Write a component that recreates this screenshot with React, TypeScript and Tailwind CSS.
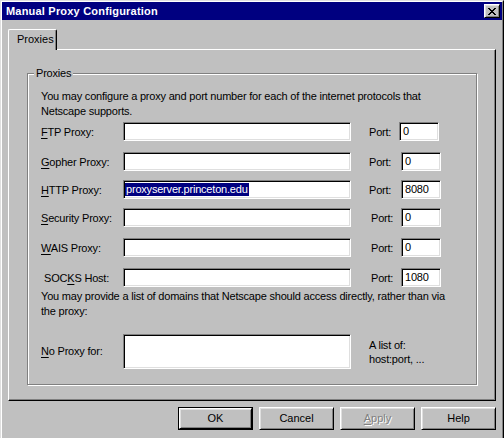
import React from "react";

const sunken =
  "bg-white border border-t-[#808080] border-l-[#808080] border-b-white border-r-white shadow-[inset_1px_1px_0_#000,inset_-1px_-1px_0_#dfdfdf]";
const raised =
  "bg-[#c0c0c0] border border-t-white border-l-white border-b-black border-r-black shadow-[inset_1px_1px_0_#dfdfdf,inset_-1px_-1px_0_#808080]";

function Key({ children }: { children: React.ReactNode }) {
  return <span className="underline underline-offset-[2px]">{children}</span>;
}

// pixel pattern for the win95 close glyph
const closeGlyph = [
  "xx....xx",
  ".xx..xx.",
  "..xxxx..",
  "...xx...",
  "..xxxx..",
  ".xx..xx.",
  "xx....xx",
];

function CloseIcon() {
  return (
    <svg width="8" height="7" viewBox="0 0 8 7" shapeRendering="crispEdges">
      {closeGlyph.map((row, y) =>
        row.split("").map((c, x) =>
          c === "x" ? <rect key={`${x}-${y}`} x={x} y={y} width="1" height="1" fill="#000" /> : null
        )
      )}
    </svg>
  );
}

interface RowProps {
  label: React.ReactNode;
  port: string;
  mt: string;
  portLabel: string;
  value?: string;
}

function ProxyRow({ label, port, mt, portLabel, value }: RowProps) {
  return (
    <div className={`flex items-center h-[19px] ${mt}`}>
      <div className="w-[82px] pt-[2px] whitespace-nowrap">{label}</div>
      <div className={`${sunken} w-[228px] h-[19px] flex items-center pl-[1px]`}>
        {value && (
          <span className="bg-[#000080] text-white leading-[13px] px-[1px]">{value}</span>
        )}
      </div>
      <div className={`${portLabel} pt-[2px]`}>Port:</div>
      <div className={`${sunken} w-[40px] h-[19px] flex items-center pl-[3px]`}>{port}</div>
    </div>
  );
}

function Button({ children, isDefault }: { children: React.ReactNode; isDefault?: boolean }) {
  if (isDefault) {
    return (
      <div className="w-[75px] h-[23px] border border-black flex">
        <div className={`${raised} flex-1 flex items-center justify-center`}>{children}</div>
      </div>
    );
  }
  return (
    <div className={`${raised} w-[75px] h-[23px] flex items-center justify-center`}>{children}</div>
  );
}

export default function App() {
  return (
    <div className="w-[504px] h-[438px] overflow-hidden bg-[#c0c0c0] border-l border-t border-r border-l-[#dfdfdf] border-t-[#dfdfdf] border-r-black font-['Liberation_Sans',Arial,sans-serif] text-[11px] leading-[15px] text-black">
      <div className="h-full border-l border-t border-r border-l-white border-t-white border-r-[#808080]">
        {/* Title bar */}
        <div className="h-[18px] bg-[#000080] flex items-center justify-between pl-[4px] pr-[2px]">
          <span className="font-bold text-white leading-[14px] tracking-[0.2px]">Manual Proxy Configuration</span>
          <div className={`${raised} w-[16px] h-[14px] flex items-center justify-center`}>
            <CloseIcon />
          </div>
        </div>

        {/* Tab strip */}
        <div className="flex mt-[9px] ml-[6px]">
          <div className="relative z-10 -mb-[1px] h-[21px] w-[49px] bg-[#c0c0c0] border-l border-t border-r border-l-white border-t-white border-r-black rounded-t-[2px] shadow-[inset_-1px_0_0_#808080] pl-[8px] pt-[2px] leading-[14px]">
            Proxies
          </div>
        </div>

        {/* Tab panel */}
        <div className="ml-[6px] w-[488px] h-[352px] border border-t-white border-l-white border-r-black border-b-black shadow-[inset_-1px_-1px_0_#808080]">
          <div className="relative mt-[23px] ml-[18px] w-[450px] h-[312px] border border-[#808080] shadow-[inset_1px_1px_0_#fff,1px_1px_0_#fff] tracking-[-0.2px]">
            <span className="absolute -top-[7px] left-[6px] bg-[#c0c0c0] px-[2px] leading-[13px]">
              Proxies
            </span>
            <div className="pl-[13px] pt-[15px]">
              <p className="whitespace-nowrap">
                You may configure a proxy and port number for each of the internet protocols that
                <br />
                Netscape supports.
              </p>

              <ProxyRow
                mt="mt-[3px]"
                label={<><Key>F</Key>TP Proxy:</>}
                port="0"
                portLabel="ml-[18px] w-[30px]"
              />
              <ProxyRow
                mt="mt-[11px]"
                label={<><Key>G</Key>opher Proxy:</>}
                port="0"
                portLabel="ml-[18px] w-[32px]"
              />
              <ProxyRow
                mt="mt-[9px]"
                label={<><Key>H</Key>TTP Proxy:</>}
                port="8080"
                portLabel="ml-[18px] w-[32px]"
                value="proxyserver.princeton.edu"
              />
              <ProxyRow
                mt="mt-[9px]"
                label={<><Key>S</Key>ecurity Proxy:</>}
                port="0"
                portLabel="ml-[20px] w-[30px]"
              />
              <ProxyRow
                mt="mt-[11px]"
                label={<><Key>W</Key>AIS Proxy:</>}
                port="0"
                portLabel="ml-[20px] w-[30px]"
              />
              <ProxyRow
                mt="mt-[11px]"
                label={<span className="pl-[3px]">SOC<Key>K</Key>S Host:</span>}
                port="1080"
                portLabel="ml-[20px] w-[30px]"
              />

              <p className="mt-[2px] whitespace-nowrap">
                You may provide a list of domains that Netscape should access directly, rather than via
                <br />
                the proxy:
              </p>

              <div className="flex items-center mt-[15px]">
                <div className="w-[82px] whitespace-nowrap">
                  <Key>N</Key>o Proxy for:
                </div>
                <div className={`${sunken} w-[228px] h-[35px]`} />
                <div className="ml-[18px] leading-[14px]">
                  A list of:
                  <br />
                  host:port, ...
                </div>
              </div>
            </div>
          </div>
        </div>

        {/* Buttons */}
        <div className="ml-[6px] w-[488px] mt-[6px] flex justify-end gap-[6px]">
          <Button isDefault>OK</Button>
          <Button>Cancel</Button>
          <Button>
            <span className="text-[#808080] [text-shadow:1px_1px_0_#fff]">
              <Key>A</Key>pply
            </span>
          </Button>
          <Button>Help</Button>
        </div>
      </div>
    </div>
  );
}
